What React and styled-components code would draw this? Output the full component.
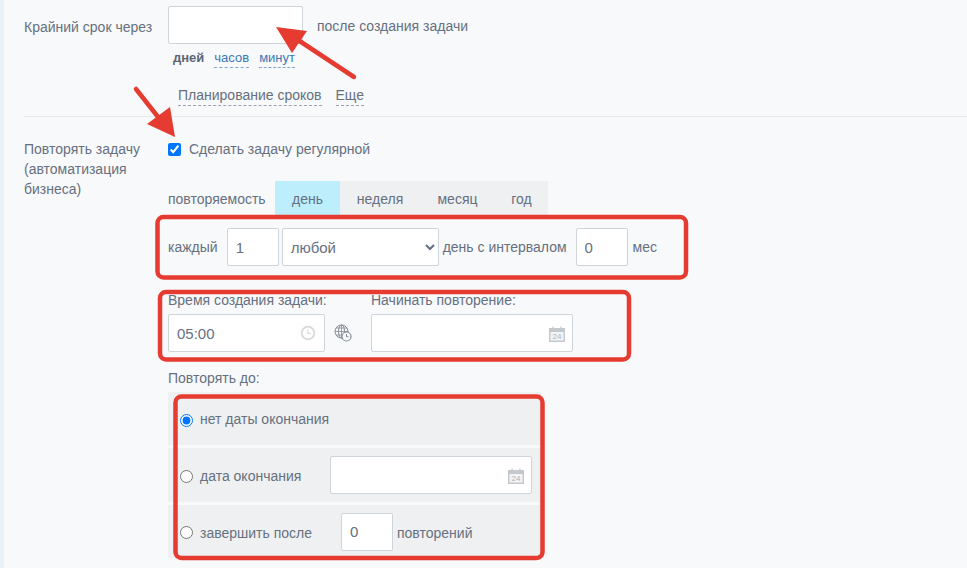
import React from "react";
import styled, { createGlobalStyle } from "styled-components";

const Global = createGlobalStyle`
  html, body { margin: 0; padding: 0; height: 568px; overflow: hidden; background: #f8f9fb; }
  body { font-family: "Liberation Sans", Arial, sans-serif; font-size: 14px; color: #667080; }
  #root { height: 568px; }
`;

const Page = styled.div`
  position: relative;
  width: 967px;
  height: 568px;
  box-sizing: border-box;
  padding: 6px 0 0 20px;
  border-left: 4px solid #eaf1f7;
`;

const Row = styled.div`
  display: grid;
  grid-template-columns: 144px 1fr;
  align-items: start;
`;

const Label = styled.div`
  line-height: 20px;
  padding-top: ${(p) => p.$top || 0}px;
`;

const Field = styled.input`
  box-sizing: border-box;
  display: block;
  width: ${(p) => p.$w}px;
  height: 38px;
  padding: 0 8px;
  border: 1px solid #ced4da;
  border-radius: 2px;
  background: #fff;
  color: #667080;
  font: 15px "Liberation Sans", Arial, sans-serif;
  flex: none;
  outline: none;
`;

const Inline = styled.div`
  display: flex;
  align-items: center;
`;

const AfterText = styled.span`
  margin-left: 14px;
  position: relative;
  top: 1px;
`;

const Units = styled.div`
  display: flex;
  gap: 10px;
  margin: 5px 0 0 5px;
  font-size: 13px;
  line-height: 18px;
`;

const Unit = styled.span`
  font-weight: ${(p) => (p.$active ? 700 : 400)};
  color: ${(p) => (p.$active ? "#5c6675" : "#3b78b8")};
  border-bottom: ${(p) => (p.$active ? "1px solid transparent" : "1px dashed #7ea6d0")};
`;

const Links = styled.div`
  display: flex;
  gap: 14px;
  margin: 18px 0 0 10px;
  line-height: 19px;
`;

const DashLink = styled.span`
  border-bottom: 1px dashed #9aa2ad;
`;

const Divider = styled.div`
  height: 1px;
  background: #e6e9ec;
  margin-top: 10px;
`;

const RepeatRow = styled(Row)`
  margin-top: 22px;
`;

const Check = styled.label`
  display: flex;
  align-items: center;
  gap: 8px;
  height: 20px;
  input { margin: 0; width: 13px; height: 13px; accent-color: #0075ff; flex: none; }
`;

const TabRow = styled.div`
  display: flex;
  align-items: stretch;
  height: 35px;
  margin-top: 22px;
`;

const TabCaption = styled.span`
  width: 107px;
  display: flex;
  align-items: center;
`;

const Tabs = styled.div`
  display: flex;
  background: #eef0f2;
`;

const Tab = styled.div`
  display: flex;
  align-items: center;
  justify-content: center;
  width: ${(p) => p.$w}px;
  background: ${(p) => (p.$active ? "#bdeefc" : "transparent")};
`;

const EveryRow = styled(Inline)`
  margin-top: 12px;
  height: 38px;
`;

const Gap = styled.span`
  flex: none;
  width: ${(p) => p.$w}px;
`;

const Select = styled.select`
  box-sizing: border-box;
  width: 157px;
  height: 38px;
  padding: 0 4px;
  flex: none;
  border: 1px solid #ced4da;
  border-radius: 2px;
  background: #fff;
  color: #667080;
  font: 15px "Liberation Sans", Arial, sans-serif;
  outline: none;
`;

const TimeRow = styled.div`
  display: flex;
  margin-top: 26px;
`;

const Column = styled.div`
  display: flex;
  flex-direction: column;
  gap: 6px;
  width: ${(p) => p.$w}px;
  flex: none;
  line-height: 16px;
  white-space: nowrap;
`;

const IconField = styled.div`
  position: relative;
  width: ${(p) => p.$w}px;
  flex: none;
  svg { position: absolute; right: ${(p) => p.$right}px; top: ${(p) => p.$top}px; }
`;

const GlobeSlot = styled.div`
  box-sizing: border-box;
  width: 46px;
  height: 38px;
  flex: none;
  align-self: flex-end;
  display: flex;
  align-items: center;
  padding-left: 9px;
`;

const UntilTitle = styled.div`
  margin-top: 18px;
  line-height: 16px;
`;

const Options = styled.div`
  display: flex;
  flex-direction: column;
  gap: 3px;
  width: 373px;
  margin-top: 6px;
`;

const Option = styled.label`
  display: flex;
  align-items: center;
  height: ${(p) => p.$h}px;
  padding-left: 12px;
  background: #eef0f1;
`;

const Radio = styled.input.attrs({ type: "radio", name: "end" })`
  margin: 0 7px 0 0;
  width: 13px;
  height: 13px;
  flex: none;
  accent-color: #0075ff;
  position: relative;
  top: ${(p) => p.$drop}px;
`;

const OptionText = styled.span`
  width: ${(p) => (p.$w ? `${p.$w}px` : "auto")};
  flex: none;
  position: relative;
  top: ${(p) => p.$drop}px;
`;

const Overlay = styled.svg`
  position: absolute;
  left: -4px;
  top: 0;
  pointer-events: none;
`;

const ClockIcon = () => (
  <svg width="16" height="16" viewBox="0 0 16 16" fill="none" stroke="#d6d9dc" strokeWidth="1.8">
    <circle cx="8" cy="8" r="6.3" />
    <path d="M8 4.5V8.5H10.8" strokeWidth="1.2" />
  </svg>
);

const CalendarIcon = () => (
  <svg width="16" height="16" viewBox="0 0 16 16">
    <rect x="0" y="2" width="16" height="14" fill="#c4c8cc" />
    <rect x="1.5" y="6" width="13" height="8.5" fill="#f3f4f5" />
    <rect x="3.5" y="0.5" width="1.2" height="3" fill="#c4c8cc" />
    <rect x="11.3" y="0.5" width="1.2" height="3" fill="#c4c8cc" />
    <text x="8" y="13.3" textAnchor="middle" fontSize="8" fontFamily="Liberation Sans" fill="#aeb2b7">24</text>
  </svg>
);

const GlobeClock = () => (
  <svg width="18" height="18" viewBox="0 0 18 18" fill="none" stroke="#868d97" strokeWidth="1">
    <circle cx="7.5" cy="7.5" r="6.5" />
    <ellipse cx="7.5" cy="7.5" rx="3" ry="6.5" />
    <path d="M1 7.5h13M2 4h11M2 11h11M7.5 1v13" strokeWidth="0.8" />
    <circle cx="12.5" cy="12.5" r="4.5" fill="#f8f9fb" strokeWidth="1.2" />
    <path d="M12.5 10v2.7h2" strokeWidth="1" />
  </svg>
);

const RED = "#e53b30";

const Frame = ({ x, y, w, h }) => (
  <rect x={x} y={y} width={w} height={h} rx="6" fill="none" stroke={RED} strokeWidth="4.5" />
);

export default function App() {
  return (
    <>
      <Global />
      <Page>
        <Row>
          <Label $top={11}>Крайний срок через</Label>
          <div>
            <Inline>
              <Field $w={135} />
              <AfterText>после создания задачи</AfterText>
            </Inline>
            <Units>
              <Unit $active>дней</Unit>
              <Unit>часов</Unit>
              <Unit>минут</Unit>
            </Units>
            <Links>
              <DashLink>Планирование сроков</DashLink>
              <DashLink>Еще</DashLink>
            </Links>
          </div>
        </Row>
        <Divider />
        <RepeatRow>
          <Label>
            Повторять задачу
            <br />
            (автоматизация
            <br />
            бизнеса)
          </Label>
          <div>
            <Check>
              <input type="checkbox" defaultChecked />
              Сделать задачу регулярной
            </Check>
            <TabRow>
              <TabCaption>повторяемость</TabCaption>
              <Tabs>
                <Tab $active $w={65}>день</Tab>
                <Tab $w={80}>неделя</Tab>
                <Tab $w={75}>месяц</Tab>
                <Tab $w={53}>год</Tab>
              </Tabs>
            </TabRow>
            <EveryRow>
              <span>каждый</span>
              <Gap $w={9} />
              <Field $w={52} defaultValue="1" />
              <Gap $w={3} />
              <Select defaultValue="any">
                <option value="any">любой</option>
              </Select>
              <Gap $w={4} />
              <span>день с интервалом</span>
              <Gap $w={9} />
              <Field $w={52} defaultValue="0" />
              <Gap $w={5} />
              <span>мес</span>
            </EveryRow>
            <TimeRow>
              <Column $w={157}>
                Время создания задачи:
                <IconField $w={157} $right={9} $top={11}>
                  <Field $w={157} defaultValue="05:00" />
                  <ClockIcon />
                </IconField>
              </Column>
              <GlobeSlot>
                <GlobeClock />
              </GlobeSlot>
              <Column $w={202}>
                Начинать повторение:
                <IconField $w={202} $right={8} $top={12}>
                  <Field $w={202} />
                  <CalendarIcon />
                </IconField>
              </Column>
            </TimeRow>
            <UntilTitle>Повторять до:</UntilTitle>
            <Options>
              <Option $h={53}>
                <Radio defaultChecked $drop={2} />
                <OptionText $drop={0}>нет даты окончания</OptionText>
              </Option>
              <Option $h={54}>
                <Radio $drop={1} />
                <OptionText $w={130} $drop={1}>дата окончания</OptionText>
                <IconField $w={202} $right={8} $top={12}>
                  <Field $w={202} />
                  <CalendarIcon />
                </IconField>
              </Option>
              <Option $h={53}>
                <Radio $drop={1} />
                <OptionText $w={141} $drop={1}>завершить после</OptionText>
                <Field $w={52} defaultValue="0" />
                <Gap $w={4} />
                <OptionText $drop={1}>повторений</OptionText>
              </Option>
            </Options>
          </div>
        </RepeatRow>
        <Overlay width="967" height="568" viewBox="0 0 967 568">
          <Frame x={157.5} y={217} w={528.5} h={60.5} />
          <Frame x={160} y={292} w={469} h={67.5} />
          <Frame x={175.5} y={396.5} w={367} h={161.5} />
          <path d="M354 77L292 36" stroke={RED} strokeWidth="4.5" strokeLinecap="round" />
          <path d="M276 27L307 31L292 53Z" fill={RED} />
          <path d="M136 89L162 122" stroke={RED} strokeWidth="4.5" strokeLinecap="round" />
          <path d="M175 137L170 107L147 124Z" fill={RED} />
        </Overlay>
      </Page>
    </>
  );
}
